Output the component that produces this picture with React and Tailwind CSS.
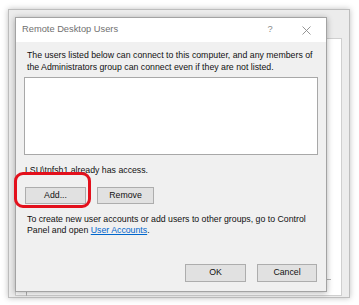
export default function App() {
  return (
    <div
      className="relative w-[359px] h-[305px] overflow-hidden bg-white text-[#111]"
      style={{ fontFamily: '"Liberation Sans", Arial, sans-serif' }}
    >
      {/* window behind the dialog */}
      <div className="absolute left-[8px] top-[9px] w-[342px] h-[289px] bg-[#ececec] border border-[#bdbdbd] shadow-[0_0_6px_rgba(0,0,0,0.25)]">
        <div className="absolute left-[6px] top-[28px] right-[7px] bottom-[1px] bg-white border border-[#cfcfcf]">
          <div className="absolute left-[10px] top-[240px] right-[10px] bottom-[-1px] border-l border-t border-[#b5b5b5]" />
        </div>
      </div>

      {/* dialog */}
      <div className="absolute left-[15px] top-[17px] w-[312px] h-[275px] flex flex-col bg-[#f0f0f0] border border-[#a3a3a3] shadow-[0_1px_6px_rgba(0,0,0,0.3)]">
        <div className="h-[24px] shrink-0 flex items-center bg-white pl-[6px] pr-[15px] text-[9.3px] text-[#707070]">
          <span className="flex-1">Remote Desktop Users</span>
          <span className="w-[10px] text-center text-[#8a8a8a]">?</span>
          <svg className="ml-[27px]" width="9" height="9" viewBox="0 0 9 9">
            <path d="M0.5 0.5 L8.5 8.5 M8.5 0.5 L0.5 8.5" stroke="#8a8a8a" strokeWidth="0.9" fill="none" />
          </svg>
        </div>

        <div className="flex flex-col px-[8px] pt-[8px] text-[8.75px] leading-[11.5px] whitespace-nowrap">
          <div className="pl-[3px]">
            <p>The users listed below can connect to this computer, and any members of</p>
            <p>the Administrators group can connect even if they are not listed.</p>
          </div>
          <div className="mt-[4px] h-[78px] bg-white border border-[#a8a8a8]" />
          <p className="mt-[10px] pl-[1px]">
            LSU\tnfsh1 already has access.
          </p>
          <div className="mt-[10px] flex gap-[11px] pl-[1px]">
            <button className="w-[61px] h-[17px] bg-[#e1e1e1] border border-[#adadad] text-[8.75px] leading-none">
              Add...
            </button>
            <button className="w-[57px] h-[17px] bg-[#e1e1e1] border border-[#adadad] text-[8.75px] leading-none">
              Remove
            </button>
          </div>
          <div className="mt-[10px] pl-[3px]">
            <p>To create new user accounts or add users to other groups, go to Control</p>
            <p>
              Panel and open <span className="text-[#0066cc] underline">User Accounts</span>.
            </p>
          </div>
          <div className="mt-[27px] flex justify-end gap-[11px] pr-[1px]">
            <button className="w-[61px] h-[18px] bg-[#e1e1e1] border border-[#adadad] text-[8.75px] leading-none">
              OK
            </button>
            <button className="w-[60px] h-[18px] bg-[#e1e1e1] border border-[#adadad] text-[8.75px] leading-none">
              Cancel
            </button>
          </div>
        </div>
      </div>

      {/* red highlight around Add */}
      <div className="absolute left-[14px] top-[172px] w-[77px] h-[36px] rounded-[9px] border-[3px] border-[#e3101c]" />
    </div>
  );
}
